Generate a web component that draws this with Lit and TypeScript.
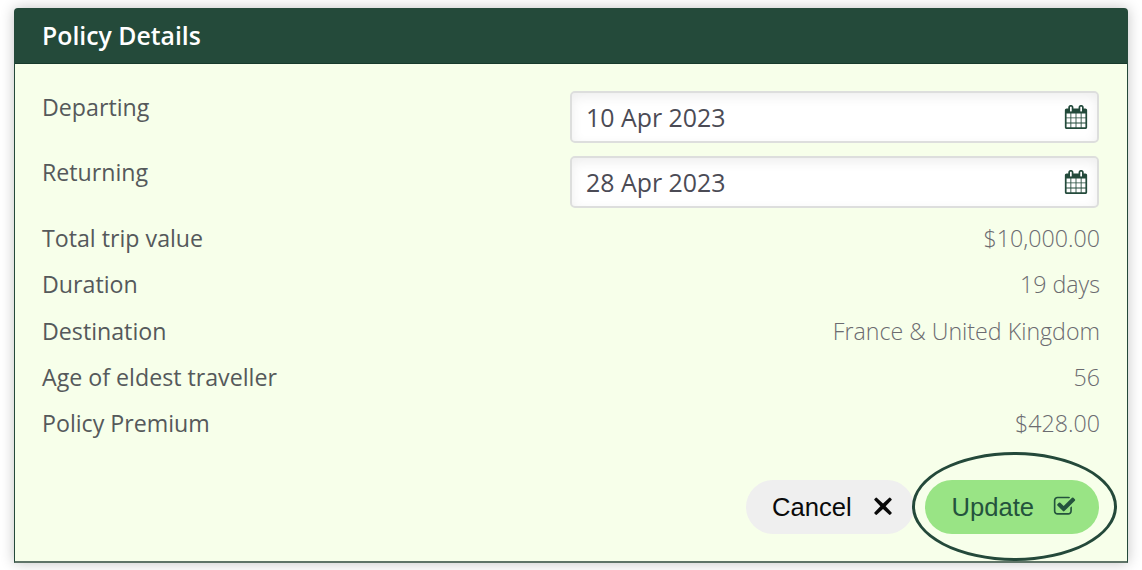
import {html, svg, LitElement, css} from 'lit';
import {customElement, property} from 'lit/decorators.js';

const ICONS: Record<string, string> = {
  calendar:
    'M192 1664h288v-288h-288v288zm352 0h320v-288h-320v288zm-352-352h288v-320h-288v320zm352 0h320v-320h-320v320zm-352-384h288v-288h-288v288zm736 736h320v-288h-320v288zm-384-736h320v-288h-320v288zm768 736h288v-288h-288v288zm-384-352h320v-320h-320v320zm-352-864v-288q0-13-9.5-22.5t-22.5-9.5h-64q-13 0-22.5 9.5t-9.5 22.5v288q0 13 9.5 22.5t22.5 9.5h64q13 0 22.5-9.5t9.5-22.5zm736 864h288v-320h-288v320zm-384-384h320v-288h-320v288zm384 0h288v-288h-288v288zm32-480v-288q0-13-9.5-22.5t-22.5-9.5h-64q-13 0-22.5 9.5t-9.5 22.5v288q0 13 9.5 22.5t22.5 9.5h64q13 0 22.5-9.5t9.5-22.5zm384-64v1280q0 52-38 90t-90 38h-1408q-52 0-90-38t-38-90v-1280q0-52 38-90t90-38h128v-96q0-66 47-113t113-47h64q66 0 113 47t47 113v96h384v-96q0-66 47-113t113-47h64q66 0 113 47t47 113v96h128q52 0 90 38t38 90z',
  times:
    'M345 440Q325 410 350 385L435 300Q465 280 495 300L896 676L1297 300Q1327 280 1357 300L1442 385Q1467 410 1447 440L1066 846L1447 1252Q1467 1282 1442 1307L1357 1392Q1327 1412 1297 1392L896 1016L495 1392Q465 1412 435 1392L350 1307Q325 1282 345 1252L726 846Z',
  check:
    'M1472 930v318q0 119-84.5 203.5t-203.5 84.5h-832q-119 0-203.5-84.5t-84.5-203.5v-832q0-119 84.5-203.5t203.5-84.5h832q63 0 117 25 15 7 18 23 3 17-9 29l-49 49q-10 10-23 10-3 0-9-2-23-6-45-6h-832q-66 0-113 47t-47 113v832q0 66 47 113t113 47h832q66 0 113-47t47-113v-254q0-13 9-22l64-64q10-10 23-10 6 0 12 3 20 8 20 29zm231-489l-814 814q-24 24-57 24t-57-24l-430-430q-24-24-24-57t24-57l110-110q24-24 57-24t57 24l263 263 647-647q24-24 57-24t57 24l110 110q24 24 24 57t-24 57z',
};

const icon = (name: string) => html`
  <svg class="icon ${name}" viewBox="0 0 1792 1792" aria-hidden="true">
    ${svg`<path fill="currentColor" d=${ICONS[name]}></path>`}
  </svg>
`;

/**
 * DateField - read-only date box with a calendar icon on the right
 */
@customElement('date-field')
export class DateField extends LitElement {
  static styles = css`
    :host {
      display: block;
    }

    .field {
      box-sizing: border-box;
      display: flex;
      align-items: center;
      justify-content: space-between;
      width: 529px;
      height: 52px;
      padding: 0 9px 1px 14px;
      border: 2px solid #dddedd;
      border-radius: 5px;
      background: #fff;
      box-shadow: inset 0 4px 12px rgba(0, 0, 0, 0.07);
      color: #4b4b55;
      font-size: 24.9px;
      line-height: 34px;
    }

    .icon {
      width: 24px;
      height: 24px;
      color: #234a3b;
    }
  `;

  @property() value = '';

  render() {
    return html`
      <div class="field">
        <span>${this.value}</span>
        ${icon('calendar')}
      </div>
    `;
  }
}

@customElement('app-root')
export class AppRoot extends LitElement {
  static styles = css`
    :host {
      display: block;
      box-sizing: border-box;
      width: 1142px;
      height: 570px;
      padding: 8px 14px 7px;
      overflow: hidden;
      background: #fff;
      font-family: 'Open Sans', sans-serif;
    }

    .card {
      box-sizing: border-box;
      height: 555px;
      border: 1.5px solid #24493a;
      border-bottom: 2px solid #5f7468;
      border-radius: 4px 4px 0 0;
      background: #f7ffea;
      box-shadow: 0 0 14px rgba(0, 0, 0, 0.24);
    }

    .header {
      box-sizing: border-box;
      height: 55px;
      padding: 0 27px;
      border-bottom: 1px solid #173a2c;
      background: #244a3a;
      color: #fff;
      font-size: 24.8px;
      font-weight: 600;
      line-height: 53px;
    }

    .body {
      padding: 27px 27px 0 27px;
    }

    .row {
      display: flex;
      justify-content: space-between;
      height: 46.35px;
      color: #55595b;
      font-size: 23.2px;
      line-height: 32px;
    }

    .row.date {
      height: 65px;
      padding-right: 1px;
    }

    .rows {
      padding-top: 1px;
    }

    .value {
      color: #6b6b70;
      font-weight: 300;
    }

    .actions {
      display: flex;
      justify-content: flex-end;
      gap: 11px;
      padding: 26px 1px 0 0;
    }

    .button {
      box-sizing: border-box;
      display: flex;
      align-items: center;
      justify-content: space-between;
      height: 54px;
      border: none;
      border-radius: 27px;
      font-family: 'Liberation Sans', Arial, sans-serif;
      font-size: 25.6px;
      line-height: 30px;
      cursor: pointer;
    }

    .button.cancel {
      width: 168px;
      padding: 0 17px 0 26px;
      background: #efefef;
      color: #0a0a0a;
    }

    .button.update {
      position: relative;
      width: 174px;
      padding: 0 23px 0 26.5px;
      background: #99e485;
      color: #24533d;
    }

    .icon.times {
      width: 28px;
      height: 28px;
    }

    .icon.check {
      width: 23px;
      height: 23px;
    }

    /* ring around the update button */
    .ring {
      position: absolute;
      top: -28px;
      left: -13px;
      box-sizing: border-box;
      width: 205px;
      height: 109px;
      border: 3px solid #24493a;
      border-radius: 50%;
      pointer-events: none;
    }
  `;

  dates = [
    {label: 'Departing', value: '10 Apr 2023'},
    {label: 'Returning', value: '28 Apr 2023'},
  ];

  details = [
    {label: 'Total trip value', value: '$10,000.00'},
    {label: 'Duration', value: '19 days'},
    {label: 'Destination', value: 'France & United Kingdom'},
    {label: 'Age of eldest traveller', value: '56'},
    {label: 'Policy Premium', value: '$428.00'},
  ];

  render() {
    return html`
      <div class="card">
        <div class="header">Policy Details</div>
        <div class="body">
          ${this.dates.map(
            (d) => html`
              <div class="row date">
                <span>${d.label}</span>
                <date-field .value=${d.value}></date-field>
              </div>
            `
          )}
          <div class="rows">
            ${this.details.map(
              (d) => html`
                <div class="row">
                  <span>${d.label}</span>
                  <span class="value">${d.value}</span>
                </div>
              `
            )}
          </div>
          <div class="actions">
            <button class="button cancel">Cancel ${icon('times')}</button>
            <button class="button update">
              Update ${icon('check')}
              <span class="ring"></span>
            </button>
          </div>
        </div>
      </div>
    `;
  }
}
